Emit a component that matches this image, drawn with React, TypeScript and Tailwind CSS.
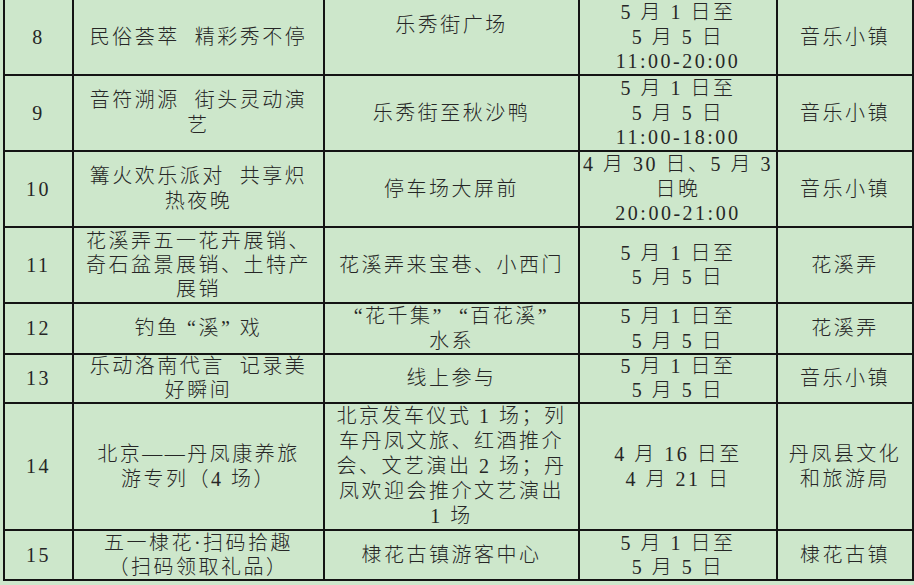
import React from "react";

type Row = {
  no: string;
  name: string[];
  place: string[];
  time: string[];
  org: string[];
  h: string;
  lh: string;
  placeCls?: string;
};

const rows: Row[] = [
  {
    no: "8",
    name: ["民俗荟萃  精彩秀不停"],
    place: ["乐秀街广场"],
    time: ["5 月 1 日至", "5 月 5 日", "11:00-20:00"],
    org: ["音乐小镇"],
    h: "h-[75px]",
    lh: "leading-[24.6px]",
    placeCls: "pb-[24px]",
  },
  {
    no: "9",
    name: ["音符溯源  街头灵动演", "艺"],
    place: ["乐秀街至秋沙鸭"],
    time: ["5 月 1 日至", "5 月 5 日", "11:00-18:00"],
    org: ["音乐小镇"],
    h: "h-[76px]",
    lh: "leading-[24.6px]",
  },
  {
    no: "10",
    name: ["篝火欢乐派对  共享炽", "热夜晚"],
    place: ["停车场大屏前"],
    time: ["4 月 30 日、5 月 3", "日晚", "20:00-21:00"],
    org: ["音乐小镇"],
    h: "h-[76px]",
    lh: "leading-[24.6px]",
  },
  {
    no: "11",
    name: ["花溪弄五一花卉展销、", "奇石盆景展销、土特产", "展销"],
    place: ["花溪弄来宝巷、小西门"],
    time: ["5 月 1 日至", "5 月 5 日"],
    org: ["花溪弄"],
    h: "h-[76px]",
    lh: "leading-[24px]",
  },
  {
    no: "12",
    name: ["钓鱼 “溪” 戏"],
    place: ["“花千集”  “百花溪”", "水系"],
    time: ["5 月 1 日至", "5 月 5 日"],
    org: ["花溪弄"],
    h: "h-[51px]",
    lh: "leading-[24.5px]",
  },
  {
    no: "13",
    name: ["乐动洛南代言  记录美", "好瞬间"],
    place: ["线上参与"],
    time: ["5 月 1 日至", "5 月 5 日"],
    org: ["音乐小镇"],
    h: "h-[49px]",
    lh: "leading-[23.5px]",
  },
  {
    no: "14",
    name: ["北京——丹凤康养旅", "游专列（4 场）"],
    place: [
      "北京发车仪式 1 场；列",
      "车丹凤文旅、红酒推介",
      "会、文艺演出 2 场；丹",
      "凤欢迎会推介文艺演出",
      "1 场",
    ],
    time: ["4 月 16 日至", "4 月 21 日"],
    org: ["丹凤县文化", "和旅游局"],
    h: "h-[127px]",
    lh: "leading-[25px]",
  },
  {
    no: "15",
    name: ["五一棣花·扫码拾趣", "（扫码领取礼品）"],
    place: ["棣花古镇游客中心"],
    time: ["5 月 1 日至", "5 月 5 日"],
    org: ["棣花古镇"],
    h: "h-[50px]",
    lh: "leading-[24px]",
  },
];

const Lines = ({ lines }: { lines: string[] }) => (
  <>
    {lines.map((l, i) => (
      <div key={i} className="whitespace-pre">
        {l}
      </div>
    ))}
  </>
);

const App = () => {
  return (
    <div
      className="min-h-screen w-full bg-[#cde7cb] pl-[3px] text-[#262626] text-[20px] tracking-[2.5px] font-light"
      style={{ fontFamily: '"Liberation Serif", "Noto Sans CJK SC", serif' }}
    >
      <table className="table-fixed border-collapse w-[909px]">
        <colgroup>
          <col className="w-[69px]" />
          <col className="w-[251px]" />
          <col className="w-[255px]" />
          <col className="w-[198px]" />
          <col className="w-[136px]" />
        </colgroup>
        <tbody>
          {rows.map((r, i) => {
            const cell =
              "border-2 border-[#141414] text-center align-middle p-0 " +
              r.lh +
              " " +
              (i === 0 ? "border-t-0 " : "");
            return (
              <tr key={r.no} className={r.h}>
                <td className={cell}>{r.no}</td>
                <td className={cell}>
                  <Lines lines={r.name} />
                </td>
                <td className={cell + (r.placeCls ?? "")}>
                  <Lines lines={r.place} />
                </td>
                <td className={cell}>
                  <Lines lines={r.time} />
                </td>
                <td className={cell}>
                  <Lines lines={r.org} />
                </td>
              </tr>
            );
          })}
        </tbody>
      </table>
    </div>
  );
};

export default App;
